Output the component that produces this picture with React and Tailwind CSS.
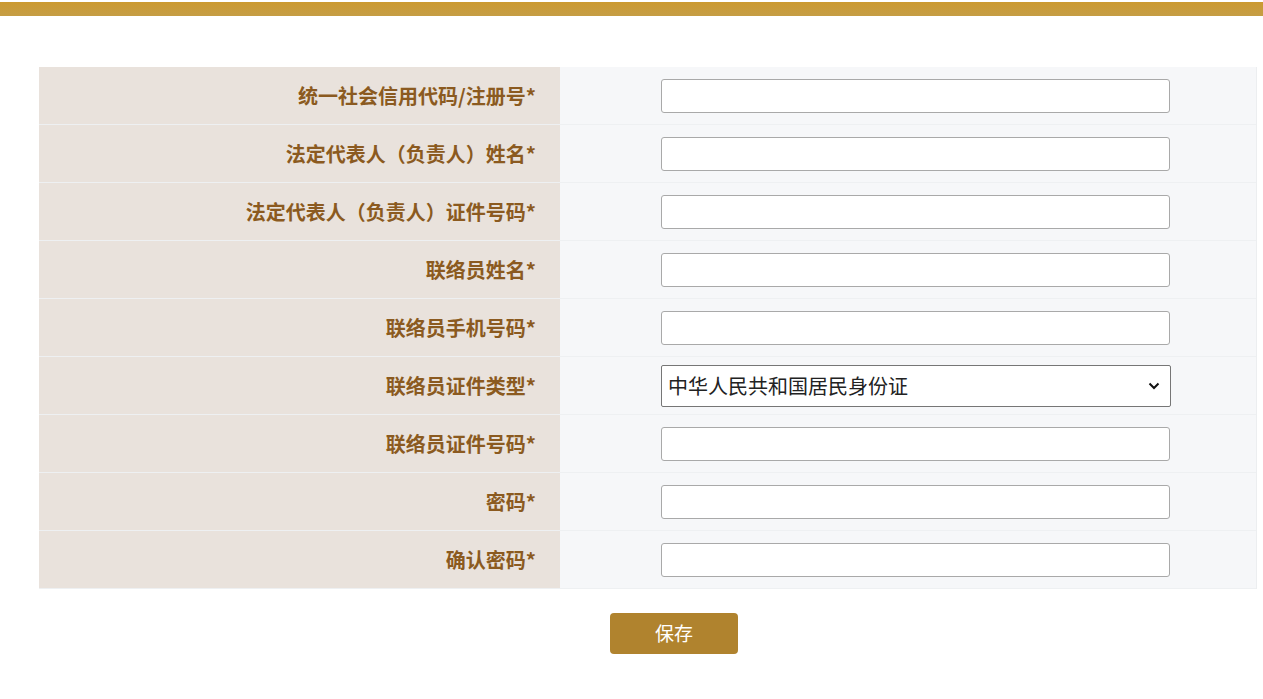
import React from "react";

const rows = [
  "统一社会信用代码/注册号*",
  "法定代表人（负责人）姓名*",
  "法定代表人（负责人）证件号码*",
  "联络员姓名*",
  "联络员手机号码*",
  "联络员证件类型*",
  "联络员证件号码*",
  "密码*",
  "确认密码*",
];

export default function App() {
  return (
    <div
      className="min-h-[699px] bg-white"
      style={{ fontFamily: '"Microsoft YaHei", "Noto Sans CJK SC", sans-serif' }}
    >
      <div className="h-[2px] bg-white" />
      <div className="h-[14px] bg-gradient-to-b from-[#cc9a30] to-[#c59d45]" />
      <div className="pt-[51px] pl-[39px] pr-[6px]">
        <div className="border-r border-[#eceef0]">
          {rows.map((label, i) => (
            <div key={i} className="flex h-[58px] border-b border-[#eef0f2]">
              <div className="w-[521px] shrink-0 bg-[#e9e2dc] flex items-center justify-end pr-[24px] text-[20px] font-bold text-[#8b5a20]">
                {label}
              </div>
              <div className="flex-1 bg-[#f6f7f9] flex items-center pl-[101px]">
                {i === 5 ? (
                  <div className="w-[510px] h-[42px] bg-white border border-[#767676] rounded-[2px] flex items-center justify-between pl-[6px] pr-[10px] text-[20px] text-[#222]">
                    <span>中华人民共和国居民身份证</span>
                    <svg width="12" height="8" viewBox="0 0 12 8">
                      <path d="M1.5 1.5 L6 6 L10.5 1.5" fill="none" stroke="#111" strokeWidth="2" />
                    </svg>
                  </div>
                ) : (
                  <input
                    className="w-[509px] h-[34px] bg-white border border-[#a9a9a9] rounded-[3px] outline-none"
                    type={i >= 7 ? "password" : "text"}
                  />
                )}
              </div>
            </div>
          ))}
        </div>
        <div className="pt-[24px] pl-[571px]">
          <button className="w-[128px] h-[41px] bg-[#b0832e] rounded-[4px] text-white text-[19px]">
            保存
          </button>
        </div>
      </div>
    </div>
  );
}
